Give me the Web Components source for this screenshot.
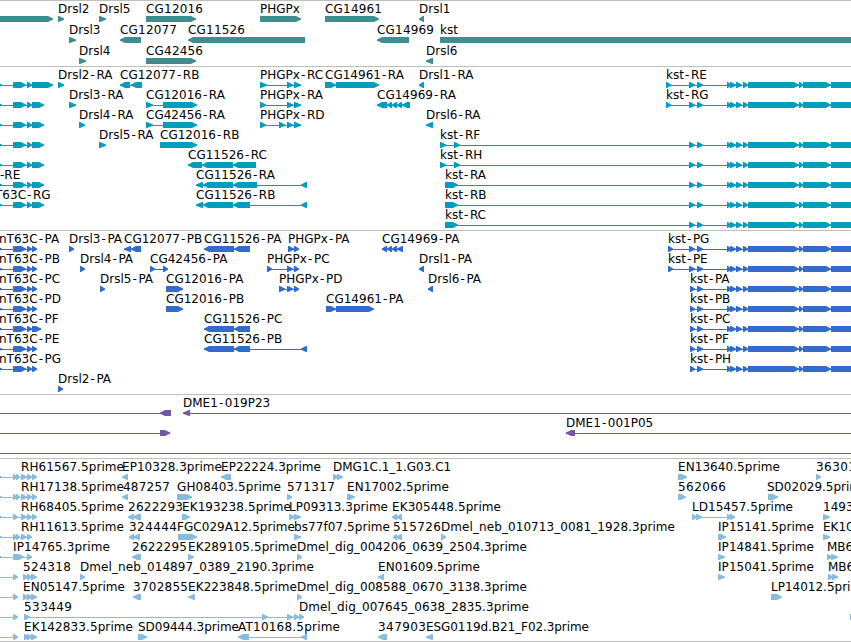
<!DOCTYPE html>
<html lang="en">
<head>
<meta charset="utf-8">
<title>Genome tracks</title>
<style>
  html, body { margin: 0; background: #fff; }
  body { width: 851px; height: 642px; overflow: hidden; }
</style>
</head>
<body>
<genome-browser></genome-browser>

<script>
/**
 * One feature: a label, a thin intron line and one arrow for each exon.
 * exons : "start:end,start:end", span : "start:end" of the line if it is
 * longer than the exons
 */
class GenomeFeature extends HTMLElement {
  connectedCallback() {
    const root = this.shadowRoot || this.attachShadow({ mode: "open" });
    const exons = this.parse("exons");
    const span = this.parse("span")[0] || [
      exons[0][0],
      exons[exons.length - 1][1],
    ];
    root.innerHTML = `
    <style>
      :host { display: block; grid-area: 1 / 1; min-width: 0; }
      svg { display: block; width: 100%; height: 21px; overflow: visible; }
      text {
        font: 12px "DejaVu Sans", sans-serif;
        fill: #000;
        white-space: pre;
      }
      .glyph { fill: currentColor; }
    </style>
    <svg>
      <g class="glyph">
        <rect x="${span[0]}" y="18" width="${span[1] - span[0]}" height="1"/>
        ${exons.map(([a, b]) => this.buildExon(a, b)).join("")}
      </g>
      ${this.buildLabel()}
    </svg>`;
  }

  parse(name) {
    const value = this.getAttribute(name);
    if (!value) return [];
    return value.split(",").map((s) => s.split(":").map(Number));
  }

  /**
   * @param {number} a left edge
   * @param {number} b right edge
   * @return {string}
   */
  buildExon(a, b) {
    const back = this.getAttribute("strand") === "-";
    const tip = back ? a : b;
    const end = back ? b : a;
    const s = back ? 1 : -1;
    // long exons get a blunter head
    const d =
      b - a > 7
        ? `M${end} 15H${tip + s * 5}L${tip + s * 2} 16.6L${tip} 17.6V18.8L${tip + s * 2} 19.6L${tip + s * 5} 21H${end}Z`
        : `M${end} 15H${end - s}L${tip} 17.6V18.8L${end - s} 21H${end}Z`;
    return `<path d="${d}"/>`;
  }

  buildLabel() {
    const label = this.getAttribute("label");
    if (!label) return "";
    const width = this.getAttribute("width");
    const dash = label.indexOf("-");
    // a little air round the hyphen
    const dx = dash > 0 ? Array(dash).fill(0).concat([1.1, 1.5]).join(" ") : "";
    return `<text x="${this.getAttribute("x")}" y="12"${
      width ? ` textLength="${width}"` : dx ? ` dx="${dx}"` : ""
    }>${label}</text>`;
  }
}

/* A lane of features; they share one grid cell and the same x scale */
class TrackRow extends HTMLElement {
  constructor() {
    super();
    this.attachShadow({ mode: "open" }).innerHTML = `
    <style>
      :host {
        display: grid;
        grid-template-columns: 100%;
        height: var(--row-height, 20px);
      }
    </style>
    <slot></slot>`;
  }
}

class GenomeTrack extends HTMLElement {
  constructor() {
    super();
    this.attachShadow({ mode: "open" }).innerHTML = `
    <style>
      :host {
        display: flex;
        flex-direction: column;
        border-top: 1px solid #bebebe;
        padding-bottom: var(--track-gap, 3px);
      }
    </style>
    <slot></slot>`;
  }
}

// exon groups which many transcripts share
const T63C = "-5:2,13:18,15:26,27:32,";
const KST = "697:703,727:731,730:736,736:742,743:748,748:799,799:803,803:831,831:870";
const KST_R = "689:695," + KST;
const KST_P = "690:695," + KST;
const CG14969 = "377:387,387:392,392:397,397:402,402:410";
const EST = "13:17,16:20,21:27,27:32,32:37";

// [label, x, strand, exons, span, label width]
const TRACKS = [
  {
    color: "#3f8c91",
    row: 21,
    gap: 2,
    rows: [
      [
        ["", 0, "+", "-20:53"],
        ["Drsl2", 58, "+", "58:64"],
        ["Drsl5", 99, "+", "99:106"],
        ["CG12016", 146, "+", "146:196", "", 57],
        ["PHGPx", 260, "+", "260:301"],
        ["CG14961", 325, "+", "325:379", "", 57],
        ["Drsl1", 419, "-", "419:424"],
      ],
      [
        ["Drsl3", 69, "+", "69:76"],
        ["CG12077", 120, "-", "120:141", "", 57],
        ["CG11526", 188, "-", "188:305", "", 57],
        ["CG14969", 377, "-", "377:409", "", 57],
        ["kst", 440, "+", "440:870"],
      ],
      [
        ["Drsl4", 79, "+", "79:86"],
        ["CG42456", 146, "+", "146:196", "", 57],
        ["Drsl6", 426, "-", "426:433"],
      ],
    ],
  },
  {
    color: "#009dbf",
    rows: [
      [
        ["", 0, "+", T63C + "32:53"],
        ["Drsl2-RA", 58, "+", "58:64"],
        ["CG12077-RB", 120, "-", "120:130,131:142"],
        ["PHGPx-RC", 260, "+", "260:267,287:293,294:301"],
        ["CG14961-RA", 325, "+", "325:336,336:379"],
        ["Drsl1-RA", 419, "-", "419:424"],
        ["kst-RE", 666, "+", "666:671," + KST_R],
      ],
      [
        ["", 0, "+", T63C + "32:44"],
        ["Drsl3-RA", 69, "+", "69:76"],
        ["CG12016-RA", 146, "+", "146:153,163:197"],
        ["PHGPx-RA", 260, "+", "260:266,287:293,294:301"],
        ["CG14969-RA", 377, "-", CG14969],
        ["kst-RG", 666, "+", "666:671," + KST_R],
      ],
      [
        ["", 0, "+", T63C + "32:44"],
        ["Drsl4-RA", 79, "+", "79:85"],
        ["CG42456-RA", 146, "+", "146:153,163:197"],
        ["PHGPx-RD", 260, "+", "260:266,279:285,287:293,294:301"],
        ["Drsl6-RA", 426, "-", "426:433"],
      ],
      [
        ["", 0, "+", T63C + "32:44"],
        ["Drsl5-RA", 99, "+", "99:106"],
        ["CG12016-RB", 160, "+", "160:197"],
        ["kst-RF", 440, "+", "440:446,454:460," + KST_R],
      ],
      [
        ["", 0, "+", T63C + "32:44"],
        ["CG11526-RC", 188, "-", "188:202,202:233,233:256"],
        ["kst-RH", 440, "+", "440:446,454:460," + KST_R],
      ],
      [
        ["-RE", 0, "+", T63C + "32:44"],
        ["CG11526-RA", 196, "-", "196:203,203:233,233:257,301:307"],
        ["kst-RA", 445, "+", "445:458," + KST_R],
      ],
      [
        ["T63C-RG", -5, "+", T63C + "32:44"],
        ["CG11526-RB", 196, "-", "196:203,203:233,233:250,301:307"],
        ["kst-RB", 445, "+", "445:458," + KST_R],
      ],
      [["kst-RC", 445, "+", "445:458," + KST_R]],
    ],
  },
  {
    color: "#316bcb",
    rows: [
      [
        ["nT63C-PA", -1, "+", T63C + "32:37"],
        ["Drsl3-PA", 69, "+", "69:74"],
        ["CG12077-PB", 124, "-", "124:131,131:141"],
        ["CG11526-PA", 204, "-", "204:234,234:250"],
        ["PHGPx-PA", 288, "+", "288:294,294:299"],
        ["CG14969-PA", 382, "-", "382:387,387:392,392:397,397:403"],
        ["kst-PG", 668, "+", "668:673," + KST_R],
      ],
      [
        ["nT63C-PB", -1, "+", T63C + "32:37"],
        ["Drsl4-PA", 80, "+", "80:85"],
        ["CG42456-PA", 150, "+", "150:155,163:168"],
        ["PHGPx-PC", 267, "+", "267:272,287:293,294:299"],
        ["Drsl1-PA", 419, "-", "419:424"],
        ["kst-PE", 668, "+", "668:673," + KST_R],
      ],
      [
        ["nT63C-PC", -1, "+", T63C + "32:37"],
        ["Drsl5-PA", 100, "+", "100:105"],
        ["CG12016-PA", 166, "+", "166:183"],
        ["PHGPx-PD", 279, "+", "279:285,287:293,294:299"],
        ["Drsl6-PA", 428, "-", "428:433"],
        ["kst-PA", 690, "+", KST_P],
      ],
      [
        ["nT63C-PD", -1, "+", T63C + "32:37"],
        ["CG12016-PB", 166, "+", "166:183"],
        ["CG14961-PA", 326, "+", "326:336,336:374"],
        ["kst-PB", 690, "+", KST_P],
      ],
      [
        ["nT63C-PF", -1, "+", T63C + "32:41"],
        ["CG11526-PC", 204, "-", "204:234,234:250"],
        ["kst-PC", 690, "+", KST_P],
      ],
      [
        ["nT63C-PE", -1, "+", T63C + "32:37"],
        ["CG11526-PB", 204, "-", "204:234,234:250,301:307"],
        ["kst-PF", 690, "+", KST_P],
      ],
      [
        ["nT63C-PG", -1, "+", T63C + "32:37"],
        ["kst-PH", 690, "+", KST_P],
      ],
      [["Drsl2-PA", 58, "+", "58:63"]],
    ],
  },
  {
    color: "#7357a5",
    rows: [
      [
        ["", 0, "-", "160:171", "-5:171"],
        ["DME1-019P23", 183, "-", "183:190", "183:870"],
      ],
      [
        ["", 0, "+", "160:170", "-5:170"],
        ["DME1-001P05", 566, "-", "566:575", "566:870"],
      ],
      [["", 0, "+", "", "-5:870"]],
    ],
  },
  {
    color: "#87bcde",
    gap: 2,
    rows: [
      [
        ["RH61567.5prime", 21, "+", "-5:2," + EST, "", 103],
        ["EP10328.3prime", 122, "-", "122:128", "", 100],
        ["EP22224.3prime", 221, "-", "221:231", "", 100],
        ["DMG1C.1_1.G03.C1", 333, "+", "333:338,337:343"],
        ["EN13640.5prime", 678, "+", "678:687", "", 102],
        ["36301", 816, "+", "816:821", "", 40],
      ],
      [
        ["RH17138.5prime", 21, "+", "-5:2," + EST, "", 103],
        ["487257", 123, "-", "122:128", "", 47],
        ["GH08403.5prime", 177, "+", "177:192", "", 104],
        ["571317", 287, "+", "287:292", "", 48],
        ["EN17002.5prime", 347, "+", "347:355", "", 102],
        ["562066", 678, "+", "678:686", "", 48],
        ["SD02029.5prime", 767, "+", "768:778"],
      ],
      [
        ["RH68405.5prime", 21, "+", "-5:2,13:18,21:27,27:32,32:37", "", 103],
        ["2622293", 128, "-", "128:134,133:141", "", 55],
        ["EK193238.5prime", 182, "+", "182:190", "", 109],
        ["LP09313.3prime", 289, "+", "289:295,294:301", "", 99],
        ["EK305448.5prime", 392, "-", "392:397,396:402", "", 109],
        ["LD15457.5prime", 692, "+", "692:697,696:702,727:731,730:735", "", 101],
        ["1493", 823, "+", "823:830"],
      ],
      [
        ["RH11613.5prime", 21, "+", "-5:2,13:17,16:20,21:27,27:32", "", 103],
        ["324444", 129, "-", "129:134,133:140", "", 48],
        ["FGC029A12.5prime", 177, "+", "178:197", "", 118],
        ["bs77f07.5prime", 294, "+", "294:301", "", 96],
        ["515726", 393, "-", "393:397,396:402", "", 48],
        ["Dmel_neb_010713_0081_1928.3prime", 441, "+", "441:446", "", 234],
        ["IP15141.5prime", 718, "+", "718:726", "", 96],
        ["EK10", 823, "+", "823:830"],
      ],
      [
        ["IP14765.3prime", 13, "+", "-5:2,13:24,27:32", "", 97],
        ["2622295", 132, "-", "132:141", "", 55],
        ["EK289105.5prime", 188, "+", "188:194", "", 109],
        ["Dmel_dig_004206_0639_2504.3prime", 297, "+", "297:302", "", 230],
        ["IP14841.5prime", 718, "+", "718:725", "", 96],
        ["MB6", 827, "+", "827:832,831:838"],
      ],
      [
        ["", 0, "+", "13:18", "-5:18"],
        ["524318", 23, "+", "23:28,27:32,31:37", "", 48],
        ["Dmel_neb_014897_0389_2190.3prime", 80, "+", "80:85", "", 234],
        ["EN01609.5prime", 378, "-", "378:384", "", 102],
        ["IP15041.5prime", 718, "+", "718:725", "", 96],
        ["MB6", 828, "+", "828:833,832:838"],
      ],
      [
        ["", 0, "+", "13:18", "-5:18"],
        ["EN05147.5prime", 23, "+", "23:28,27:32,31:37", "", 102],
        ["3702855", 133, "-", "133:141", "", 55],
        ["EK223848.5prime", 188, "-", "188:195", "", 109],
        ["Dmel_dig_008588_0670_3138.3prime", 297, "+", "297:302", "", 230],
        ["LP14012.5prime", 771, "+", "771:782"],
      ],
      [
        ["", 0, "+", "13:18", "-5:18"],
        ["533449", 24, "+", "24:30,262:268,287:293,294:299", "", 48],
        ["Dmel_dig_007645_0638_2835.3prime", 299, "+", "299:304", "", 230],
        ["", 0, "+", "850:856"],
      ],
      [
        ["", 0, "+", "13:18", "-5:18"],
        ["EK142833.5prime", 24, "+", "24:29,27:32,31:37", "", 109],
        ["SD09444.3prime", 138, "+", "138:147", "", 101],
        ["AT10168.5prime", 238, "-", "238:249,301:307", "", 102],
        ["347903", 378, "-", "378:387", "", 48],
        ["ESG0119d.B21_F02.3prime", 426, "-", "426:433", "", 163],
      ],
    ],
  },
];

class GenomeBrowser extends HTMLElement {
  constructor() {
    super();
    this.attachShadow({ mode: "open" }).innerHTML = `
    <style>
      :host {
        display: flex;
        flex-direction: column;
        width: 851px;
        overflow: hidden;
        background: #fff;
        border-bottom: 1px solid #bebebe;
      }
    </style>
    ${TRACKS.map((t) => this.buildTrack(t)).join("")}`;
  }

  buildTrack({ color, rows, row = 20, gap = 3 }) {
    return `<genome-track style="color:${color};--row-height:${row}px;--track-gap:${gap}px">
      ${rows
        .map((r) => `<track-row>${r.map(this.buildFeature).join("")}</track-row>`)
        .join("")}
    </genome-track>`;
  }

  buildFeature([label, x, strand, exons, span = "", width = ""]) {
    return `<genome-feature label="${label}" x="${x}" strand="${strand}"
      exons="${exons}" span="${span}" width="${width}"></genome-feature>`;
  }
}

customElements.define("genome-feature", GenomeFeature);
customElements.define("track-row", TrackRow);
customElements.define("genome-track", GenomeTrack);
customElements.define("genome-browser", GenomeBrowser);
</script>
</body>
</html>
